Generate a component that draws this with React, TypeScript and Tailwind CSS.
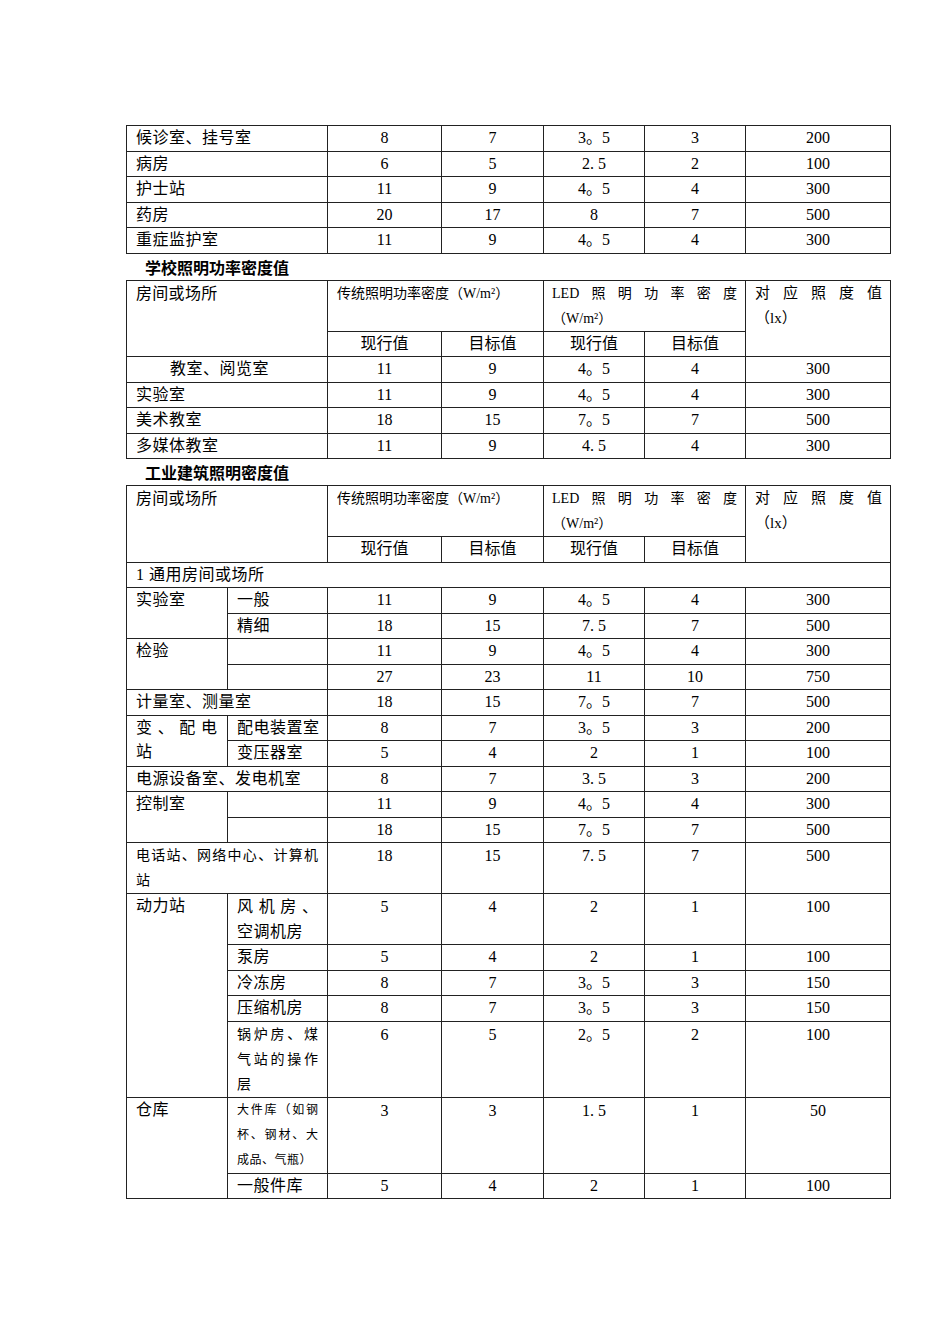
import React from "react";

const B = "border-r border-b border-[#222] align-top p-0";
const TXT = `${B} pl-[9px] text-left text-[16px] leading-[24.5px] tracking-[0.5px]`;
const NUM = `${B} text-center text-[16px] leading-[24.5px]`;
const TABLE =
  "table-fixed border-separate border-spacing-0 border-l border-t border-[#222] w-[765px]";

function Cols() {
  return (
    <colgroup>
      <col className="w-[101px]" />
      <col className="w-[100px]" />
      <col className="w-[114px]" />
      <col className="w-[102px]" />
      <col className="w-[101px]" />
      <col className="w-[101px]" />
      <col className="w-[145px]" />
    </colgroup>
  );
}

function Spread({ items, cls = "" }: { items: string[]; cls?: string }) {
  return (
    <div className={`flex justify-between ${cls}`}>
      {items.map((t, i) => (
        <span key={i}>{t}</span>
      ))}
    </div>
  );
}

function Val({ x }: { x: string }) {
  if (x.includes(".")) {
    const [a, b] = x.split(".");
    return (
      <>
        {a}
        <span className="inline-block w-[8px] text-left">.</span>
        {b}
      </>
    );
  }
  return <>{x}</>;
}

function Nums({ v, multi = false }: { v: string[]; multi?: boolean }) {
  return (
    <>
      {v.map((x, i) => (
        <td key={i} className={multi ? `${B} text-center text-[16px] leading-[25px]` : NUM}>
          <Val x={x} />
        </td>
      ))}
    </>
  );
}

function Header() {
  return (
    <>
      <tr>
        <td colSpan={2} rowSpan={2} className={`${B} pl-[9px] text-[16px] leading-[25px] tracking-[0.3px]`}>
          房间或场所
        </td>
        <td colSpan={2} className={`${B} pl-[9px] text-[14px] leading-[25px]`}>
          传统照明功率密度（W/m²）
        </td>
        <td colSpan={2} className={`${B} pl-[8px] pr-[8px] text-[14px] leading-[25px]`}>
          <Spread items={["LED", "照", "明", "功", "率", "密", "度"]} />
          <div>（W/m²）</div>
        </td>
        <td rowSpan={2} className={`${B} pl-[9px] pr-[8px] text-[15px] leading-[25px]`}>
          <Spread items={["对", "应", "照", "度", "值"]} />
          <div>（lx）</div>
        </td>
      </tr>
      <tr>
        <td className={NUM}>现行值</td>
        <td className={NUM}>目标值</td>
        <td className={NUM}>现行值</td>
        <td className={NUM}>目标值</td>
      </tr>
    </>
  );
}

function Heading({ children }: { children: React.ReactNode }) {
  return (
    <div className="pl-[19px] h-[26px] leading-[26px] text-[16px] font-bold font-['Noto_Sans_CJK_SC',sans-serif] text-black">
      {children}
    </div>
  );
}

const hospital: string[][] = [
  ["候诊室、挂号室", "8", "7", "3。5", "3", "200"],
  ["病房", "6", "5", "2.5", "2", "100"],
  ["护士站", "11", "9", "4。5", "4", "300"],
  ["药房", "20", "17", "8", "7", "500"],
  ["重症监护室", "11", "9", "4。5", "4", "300"],
];

const school: string[][] = [
  ["实验室", "11", "9", "4。5", "4", "300"],
  ["美术教室", "18", "15", "7。5", "7", "500"],
  ["多媒体教室", "11", "9", "4.5", "4", "300"],
];

export default function App() {
  return (
    <div className="min-h-[1344px] w-[950px] bg-white text-black font-['Liberation_Serif','Noto_Sans_CJK_SC',serif] pt-[125px] pl-[126px]">
      {/* Hospital continuation */}
      <table className={TABLE}>
        <Cols />
        <tbody>
          {hospital.map((r, i) => (
            <tr key={i}>
              <td colSpan={2} className={TXT}>
                {r[0]}
              </td>
              <Nums v={r.slice(1)} />
            </tr>
          ))}
        </tbody>
      </table>

      <Heading>学校照明功率密度值</Heading>

      <table className={TABLE}>
        <Cols />
        <tbody>
          <Header />
          <tr>
            <td colSpan={2} className={`${TXT} pl-[43px]`}>
              教室、阅览室
            </td>
            <Nums v={["11", "9", "4。5", "4", "300"]} />
          </tr>
          {school.map((r, i) => (
            <tr key={i}>
              <td colSpan={2} className={TXT}>
                {r[0]}
              </td>
              <Nums v={r.slice(1)} />
            </tr>
          ))}
        </tbody>
      </table>

      <Heading>工业建筑照明密度值</Heading>

      <table className={TABLE}>
        <Cols />
        <tbody>
          <Header />
          <tr>
            <td colSpan={7} className={TXT}>
              1 通用房间或场所
            </td>
          </tr>
          <tr>
            <td rowSpan={2} className={TXT}>实验室</td>
            <td className={TXT}>一般</td>
            <Nums v={["11", "9", "4。5", "4", "300"]} />
          </tr>
          <tr>
            <td className={TXT}>精细</td>
            <Nums v={["18", "15", "7.5", "7", "500"]} />
          </tr>
          <tr>
            <td rowSpan={2} className={TXT}>检验</td>
            <td className={TXT}></td>
            <Nums v={["11", "9", "4。5", "4", "300"]} />
          </tr>
          <tr>
            <td className={TXT}></td>
            <Nums v={["27", "23", "11", "10", "750"]} />
          </tr>
          <tr>
            <td colSpan={2} className={TXT}>计量室、测量室</td>
            <Nums v={["18", "15", "7。5", "7", "500"]} />
          </tr>
          <tr>
            <td rowSpan={2} className={`${B} pl-[9px] pr-[10px] text-[16px] leading-[24.5px]`}>
              <Spread items={["变", "、", "配", "电"]} />
              <div>站</div>
            </td>
            <td className={TXT}>配电装置室</td>
            <Nums v={["8", "7", "3。5", "3", "200"]} />
          </tr>
          <tr>
            <td className={TXT}>变压器室</td>
            <Nums v={["5", "4", "2", "1", "100"]} />
          </tr>
          <tr>
            <td colSpan={2} className={TXT}>电源设备室、发电机室</td>
            <Nums v={["8", "7", "3.5", "3", "200"]} />
          </tr>
          <tr>
            <td rowSpan={2} className={TXT}>控制室</td>
            <td className={TXT}></td>
            <Nums v={["11", "9", "4。5", "4", "300"]} />
          </tr>
          <tr>
            <td className={TXT}></td>
            <Nums v={["18", "15", "7。5", "7", "500"]} />
          </tr>
          <tr>
            <td colSpan={2} className={`${B} pl-[9px] pr-[9px] text-[14px] leading-[25px]`}>
              <Spread items={["电", "话", "站", "、", "网", "络", "中", "心", "、", "计", "算", "机"]} />
              <div>站</div>
            </td>
            <Nums v={["18", "15", "7.5", "7", "500"]} multi />
          </tr>
          <tr>
            <td rowSpan={5} className={TXT}>动力站</td>
            <td className={`${B} pl-[9px] pr-[9px] text-[16px] leading-[25px]`}>
              <Spread items={["风", "机", "房", "、"]} />
              <div className="tracking-[0.5px]">空调机房</div>
            </td>
            <Nums v={["5", "4", "2", "1", "100"]} multi />
          </tr>
          <tr>
            <td className={TXT}>泵房</td>
            <Nums v={["5", "4", "2", "1", "100"]} />
          </tr>
          <tr>
            <td className={TXT}>冷冻房</td>
            <Nums v={["8", "7", "3。5", "3", "150"]} />
          </tr>
          <tr>
            <td className={TXT}>压缩机房</td>
            <Nums v={["8", "7", "3。5", "3", "150"]} />
          </tr>
          <tr>
            <td className={`${B} pl-[9px] pr-[9px] text-[14px] leading-[25px]`}>
              <Spread items={["锅", "炉", "房", "、", "煤"]} />
              <Spread items={["气", "站", "的", "操", "作"]} />
              <div>层</div>
            </td>
            <Nums v={["6", "5", "2。5", "2", "100"]} multi />
          </tr>
          <tr>
            <td rowSpan={2} className={TXT}>仓库</td>
            <td className={`${B} pl-[9px] pr-[9px] text-[12px] leading-[25px]`}>
              <Spread items={["大", "件", "库", "（", "如", "钢"]} />
              <Spread items={["杯", "、", "钢", "材", "、", "大"]} />
              <div className="tracking-[0.5px]">成品、气瓶）</div>
            </td>
            <Nums v={["3", "3", "1.5", "1", "50"]} multi />
          </tr>
          <tr>
            <td className={TXT}>一般件库</td>
            <Nums v={["5", "4", "2", "1", "100"]} />
          </tr>
        </tbody>
      </table>
    </div>
  );
}
